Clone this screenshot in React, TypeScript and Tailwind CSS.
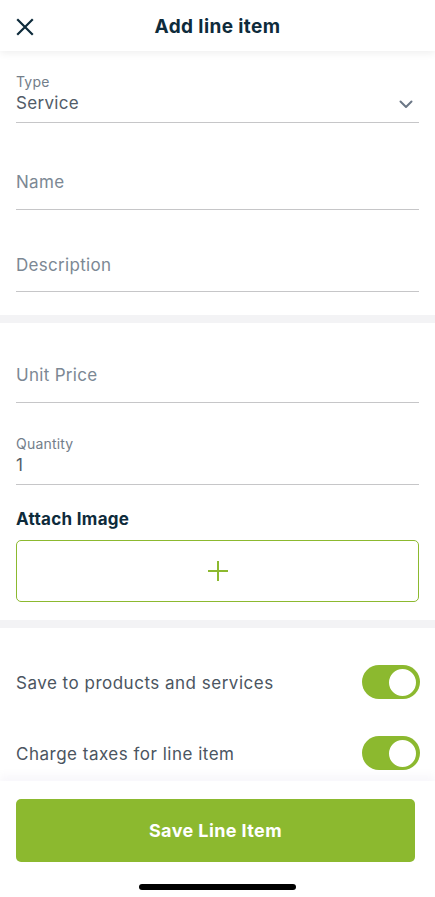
import React from "react";

function Field({ label, value, placeholder, className = "" }: { label?: string; value?: string; placeholder?: string; className?: string }) {
  return (
    <div className={`mx-4 border-b border-[#c6c6c8] ${className}`}>
      {label && <div className="text-[14px] leading-[20px] tracking-[0.2px] text-[#737e8a]">{label}</div>}
      {value && <div className="text-[17px] leading-[22px] tracking-[0.3px] text-[#525c68]">{value}</div>}
      {placeholder && <div className="text-[17px] leading-[22px] tracking-[0.3px] text-[#7c8894]">{placeholder}</div>}
    </div>
  );
}

function Toggle() {
  return (
    <div className="flex h-[34px] w-[58px] items-center justify-end rounded-full bg-[#8cb92f] px-[2px]">
      <div className="h-[31px] w-[31px] rounded-full border-2 border-[#8cb92f] bg-white" />
    </div>
  );
}

export default function App() {
  return (
    <div className="relative flex h-[897px] w-[435px] flex-col overflow-hidden bg-white" style={{ fontFamily: "Inter, 'Noto Sans', sans-serif" }}>
      <div className="relative z-10 flex h-[51px] items-center justify-center bg-white pt-[3px] shadow-[0_2px_8px_rgba(0,0,0,0.07)]">
        <svg className="absolute left-[16px] top-[18px]" width="18" height="18" viewBox="0 0 18 18" fill="none" stroke="#0e2b3b" strokeWidth="2.2" strokeLinecap="square">
          <path d="M2 2 L16 16 M16 2 L2 16" />
        </svg>
        <div className="text-[19px] font-bold leading-[24px] tracking-[0.4px] text-[#0e2b3b]">Add line item</div>
      </div>

      <div className="pb-[23px]">
        <div className="relative mx-4 mt-[21px] border-b border-[#c6c6c8] pb-[8px]">
          <div className="text-[14px] leading-[20px] tracking-[0.2px] text-[#737e8a]">Type</div>
          <div className="text-[17px] leading-[22px] tracking-[0.3px] text-[#525c68]">Service</div>
          <svg className="absolute right-[6px] top-[28px]" width="14" height="9" viewBox="0 0 14 9" fill="none" stroke="#6b7786" strokeWidth="2" strokeLinecap="round" strokeLinejoin="round">
            <path d="M1.5 1.5 L7 7 L12.5 1.5" />
          </svg>
        </div>
        <Field placeholder="Name" className="mt-[48px] pb-[16px]" />
        <Field placeholder="Description" className="mt-[44px] pb-[15px]" />
      </div>

      <div className="h-[8px] bg-[#f3f3f5]" />

      <div className="pb-[18px]">
        <Field placeholder="Unit Price" className="mt-[41px] pb-[16px]" />
        <Field label="Quantity" value="1" className="mt-[31px] pb-[8px]" />
        <div className="mx-4 mt-[23px] text-[17px] font-bold leading-[22px] tracking-[0.3px] text-[#0e2b3b]">Attach Image</div>
        <div className="mx-4 mt-[10px] flex h-[62px] items-center justify-center rounded-[5px] border border-[#8cb92f]">
          <svg width="22" height="22" viewBox="0 0 22 22" fill="none" stroke="#8cb92f" strokeWidth="2">
            <path d="M11 1 V21 M1 11 H21" />
          </svg>
        </div>
      </div>

      <div className="h-[8px] bg-[#f3f3f5]" />

      <div className="flex flex-col gap-[37px] pt-[37px]">
        <div className="flex items-center justify-between pl-4 pr-[15px]">
          <span className="pt-[2px] text-[17px] leading-[22px] tracking-[0.5px] text-[#4b5561]">Save to products and services</span>
          <Toggle />
        </div>
        <div className="flex items-center justify-between pl-4 pr-[15px]">
          <span className="pt-[2px] text-[17px] leading-[22px] tracking-[0.5px] text-[#4b5561]">Charge taxes for line item</span>
          <Toggle />
        </div>
      </div>

      <div className="relative mt-auto flex h-[116px] flex-col bg-white shadow-[0_-6px_8px_rgba(120,100,170,0.05)]">
        <div className="ml-4 mr-[20px] mt-[18px] flex h-[63px] items-center justify-center rounded-[5px] bg-[#8cb92f]">
          <span className="text-[18px] font-bold leading-[22px] tracking-[0.4px] text-white">Save Line Item</span>
        </div>
        <div className="mx-auto mt-[22px] h-[6px] w-[157px] rounded-full bg-black" />
      </div>
    </div>
  );
}
